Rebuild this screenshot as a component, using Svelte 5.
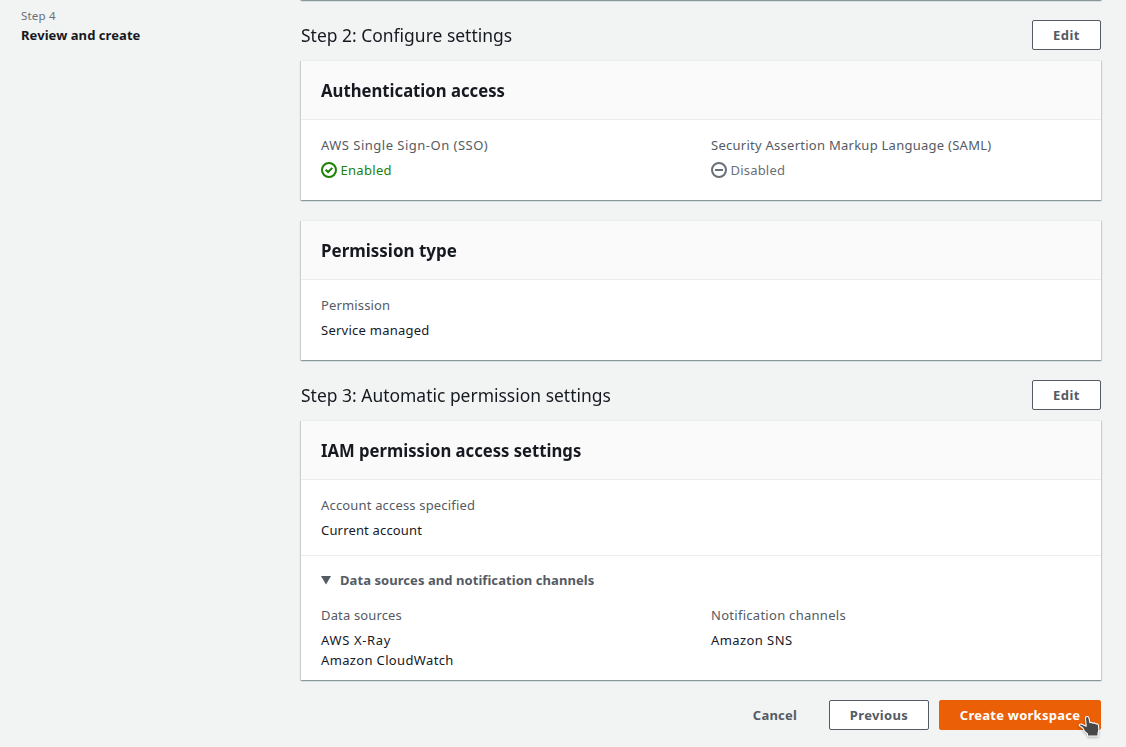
<script>
  const enabled = true;
</script>

{#snippet text(content, spacing)}
  <span style:letter-spacing="{spacing}px">{content}</span>
{/snippet}

{#snippet field(label, labelSpacing, values)}
  <div class="field">
    <div class="label">{@render text(label, labelSpacing)}</div>
    {#each values as [value, spacing]}
      <div class="value">{@render text(value, spacing)}</div>
    {/each}
  </div>
{/snippet}

<div class="page">
  <nav>
    <div class="step">Step 4</div>
    <div class="current">Review and create</div>
  </nav>

  <main>
    <section class="card previous-card"></section>

    <header class="section-head">
      <h2>Step 2: Configure settings</h2>
      <button class="edit">Edit</button>
    </header>

    <section class="card">
      <h3><span class="auth">Authentication access</span></h3>
      <div class="body cols">
        <div class="field">
          <div class="label">{@render text('AWS Single Sign-On (SSO)', 0.49)}</div>
          <div class="status" class:enabled>
            <svg width="16" height="16" viewBox="0 0 16 16" fill="none" stroke="currentColor" stroke-width="2">
              <circle cx="8" cy="8" r="7" />
              <path d="M4.600 7.700 7.100 10 11.300 5.900" />
            </svg>
            {@render text('Enabled', 0.3)}
          </div>
        </div>
        <div class="field">
          <div class="label">{@render text('Security Assertion Markup Language (SAML)', 0.26)}</div>
          <div class="status">
            <svg width="16" height="16" viewBox="0 0 16 16" fill="none" stroke="currentColor" stroke-width="2">
              <circle cx="8" cy="8" r="7" />
              <path d="M4 8H12" />
            </svg>
            {@render text('Disabled', 0.2)}
          </div>
        </div>
      </div>
    </section>

    <section class="card second">
      <h3><span class="perm">Permission type</span></h3>
      <div class="body">
        {@render field('Permission', 0.15, [['Service managed', 0.25]])}
      </div>
    </section>

    <header class="section-head">
      <h2>Step 3: Automatic permission settings</h2>
      <button class="edit">Edit</button>
    </header>

    <section class="card">
      <h3><span class="iam">IAM permission access settings</span></h3>
      <div class="body account">
        {@render field('Account access specified', 0.17, [['Current account', 0.17]])}
      </div>
      <div class="details">
        <div class="toggle">
          <svg width="10" height="9" viewBox="0 0 10 9"><path d="M0 0H10L5 8.6Z" fill="currentColor" /></svg>
          {@render text('Data sources and notification channels', 0.06)}
        </div>
        <div class="cols">
          {@render field('Data sources', 0.15, [['AWS X-Ray', 0.64], ['Amazon CloudWatch', 0.35]])}
          {@render field('Notification channels', 0.28, [['Amazon SNS', 0.42]])}
        </div>
      </div>
    </section>

    <footer>
      <button class="cancel">Cancel</button>
      <button class="prev">Previous</button>
      <button class="create">
        Create workspace
        <svg class="cursor" width="24" height="24" viewBox="0 0 24 24">
          <path d="M9.300 1.500C10.300 1.500 10.800 2.200 11 3.200L11.900 7.700L13.500 7.300L15 8.200L16.500 7.900L18 8.900L19.300 8.700Q20.400 9 20.500 10.500L20.900 15L20 18.500V21H9.500V18.800L6.500 16.300L4.800 13L1.500 10.800C.7 9.800 2 8.700 3.300 9.100L8.200 11.200L7.500 3.200C7.400 2.200 8.200 1.500 9.300 1.500Z" fill="#484848" stroke="#fff" stroke-width="1.100" stroke-linejoin="round" />
        </svg>
      </button>
    </footer>
  </main>
</div>

<style>
  :global(body) { background: #f2f3f3; overflow: hidden; }
  .page {
    display: grid;
    grid-template-columns: 280px 800px;
    padding: 0 25px 0 21px;
    height: 747px;
    box-sizing: border-box;
    overflow: hidden;
    font: 13px/20px "Noto Sans", "Open Sans", sans-serif;
    color: #16191f;
    white-space: nowrap;
  }
  nav { padding-top: 6px; }
  .step { font-size: 11.500px; letter-spacing: .2px; color: #687078; }
  .current { font-weight: 700; line-height: 18px; letter-spacing: .06px; }
  .card {
    background: #fff;
    box-shadow: 0 1px 1px 0 rgba(0, 40, 40, .24), 1px 1px 1px 0 rgba(0, 40, 40, .14), -1px 1px 1px 0 rgba(0, 40, 40, .14);
    border-top: 1px solid #eaeded;
    box-sizing: border-box;
  }
  .previous-card { height: 20px; margin-top: -20px; }
  .second { margin-top: 20px; }
  .section-head {
    display: flex;
    align-items: center;
    justify-content: space-between;
    height: 30px;
    padding: 20px 0 10px;
  }
  h2, h3 { margin: 0; font-size: 18px; line-height: 22px; }
  h2 { font-weight: 400; transform: scaleX(.97); transform-origin: left; }
  h3 {
    padding: 18px 20px;
    background: #fafafa;
    border-bottom: 1px solid #eaeded;
  }
  h3 span { display: inline-block; transform-origin: left; }
  .auth { transform: scaleX(.927); }
  .perm { transform: scaleX(.942); }
  .iam { transform: scaleX(.926); }
  .body { padding: 15px 20px 20px; }
  .account { padding-bottom: 15px; border-bottom: 1px solid #eaeded; }
  .cols { display: grid; grid-template-columns: 390px 1fr; }
  .label { color: #545b64; margin-bottom: 5px; }
  .status { display: flex; align-items: center; gap: 3.500px; color: #687078; }
  .status.enabled { color: #1d8102; }
  .details { padding: 14px 20px 10px; }
  .toggle {
    display: flex;
    align-items: center;
    gap: 9px;
    margin-bottom: 15px;
    font-weight: 700;
    color: #545b64;
  }
  button {
    box-sizing: border-box;
    height: 30px;
    padding: 0;
    border: 1px solid #545b64;
    border-radius: 2px;
    background: #fff;
    color: #545b64;
    font: 700 13px/20px "Noto Sans", "Open Sans", sans-serif;
    letter-spacing: .25px;
  }
  .edit { width: 69px; letter-spacing: .5px; }
  footer { display: flex; justify-content: flex-end; padding-top: 20px; }
  .cancel { width: 86px; border-color: transparent; background: none; margin-right: 11px; }
  .prev { width: 100px; margin-right: 10px; letter-spacing: .35px; }
  .create { position: relative; width: 162px; background: #eb5f07; border-color: #eb5f07; color: #fff; }
  .cursor { position: absolute; left: 138px; top: 14px; filter: drop-shadow(0 1px 1px rgba(0, 0, 0, .3)); }
</style>
